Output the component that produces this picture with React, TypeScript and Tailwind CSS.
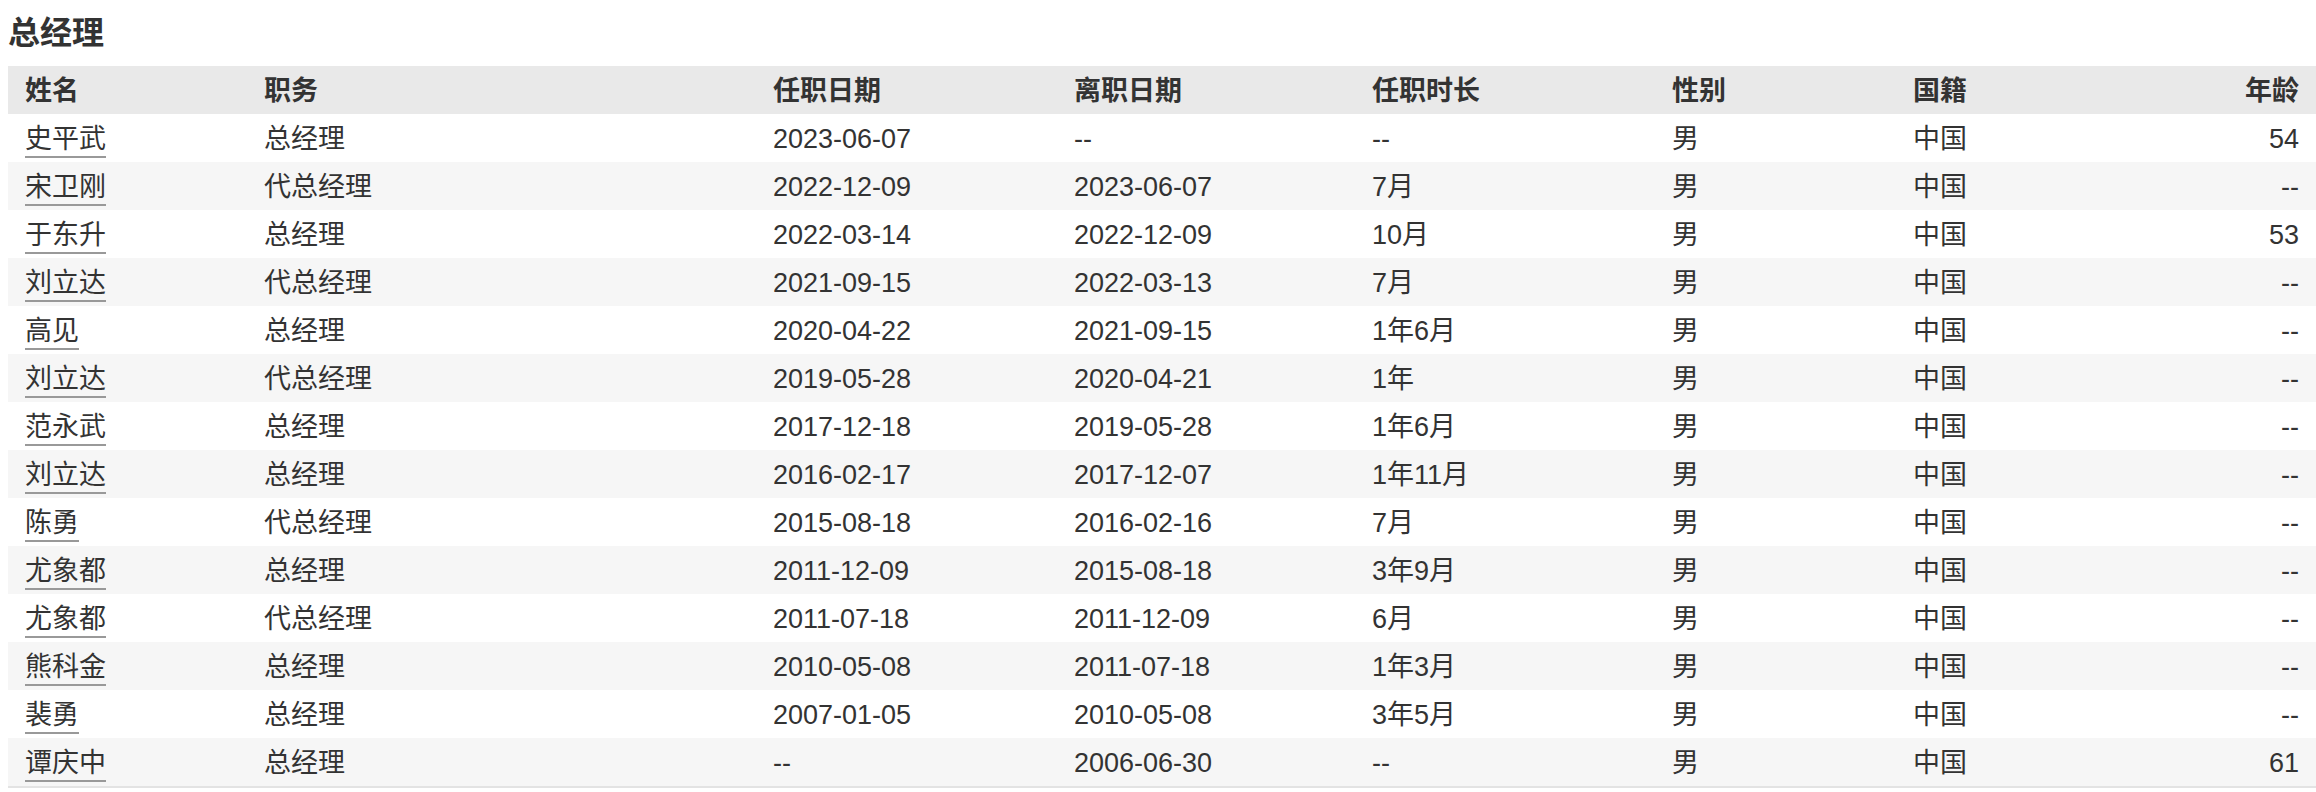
import React from 'react';

type Row = [string, string, string, string, string, string, string, string];

const rows: Row[] = [
  ['史平武', '总经理', '2023-06-07', '--', '--', '男', '中国', '54'],
  ['宋卫刚', '代总经理', '2022-12-09', '2023-06-07', '7月', '男', '中国', '--'],
  ['于东升', '总经理', '2022-03-14', '2022-12-09', '10月', '男', '中国', '53'],
  ['刘立达', '代总经理', '2021-09-15', '2022-03-13', '7月', '男', '中国', '--'],
  ['高见', '总经理', '2020-04-22', '2021-09-15', '1年6月', '男', '中国', '--'],
  ['刘立达', '代总经理', '2019-05-28', '2020-04-21', '1年', '男', '中国', '--'],
  ['范永武', '总经理', '2017-12-18', '2019-05-28', '1年6月', '男', '中国', '--'],
  ['刘立达', '总经理', '2016-02-17', '2017-12-07', '1年11月', '男', '中国', '--'],
  ['陈勇', '代总经理', '2015-08-18', '2016-02-16', '7月', '男', '中国', '--'],
  ['尤象都', '总经理', '2011-12-09', '2015-08-18', '3年9月', '男', '中国', '--'],
  ['尤象都', '代总经理', '2011-07-18', '2011-12-09', '6月', '男', '中国', '--'],
  ['熊科金', '总经理', '2010-05-08', '2011-07-18', '1年3月', '男', '中国', '--'],
  ['裴勇', '总经理', '2007-01-05', '2010-05-08', '3年5月', '男', '中国', '--'],
  ['谭庆中', '总经理', '--', '2006-06-30', '--', '男', '中国', '61'],
];

const headers = ['姓名', '职务', '任职日期', '离职日期', '任职时长', '性别', '国籍'];

const grid = 'grid grid-cols-[239px_509px_301px_298px_300px_241px_200px_1fr] items-center h-[48px] pt-[2px]';

const App: React.FC = () => {
  return (
    <div
      className="bg-white text-[#333] w-[2316px] h-[792px] overflow-hidden"
      style={{ fontFamily: '"Liberation Sans", "Noto Sans CJK SC", sans-serif' }}
    >
      <div className="h-[66px] flex items-center pl-2 text-[32px] font-bold">总经理</div>
      <div className="ml-2 border-b-2 border-[#e3e3e3] text-[27px]">
        <div className={`${grid} bg-[#e9e9e9] font-bold`}>
          {headers.map((h) => (
            <div key={h} className="pl-[17px]">
              {h}
            </div>
          ))}
          <div className="pr-[17px] text-right">年龄</div>
        </div>
        {rows.map((r, i) => (
          <div key={i} className={`${grid} ${i % 2 === 1 ? 'bg-[#f6f6f6]' : 'bg-white'}`}>
            <div className="pl-[17px]">
              <span className="inline-block leading-[34px] border-b-2 border-[#999]">{r[0]}</span>
            </div>
            {r.slice(1, 7).map((c, j) => (
              <div key={j} className="pl-[17px]">
                {c}
              </div>
            ))}
            <div className="pr-[17px] text-right">{r[7]}</div>
          </div>
        ))}
      </div>
    </div>
  );
};

export default App;
